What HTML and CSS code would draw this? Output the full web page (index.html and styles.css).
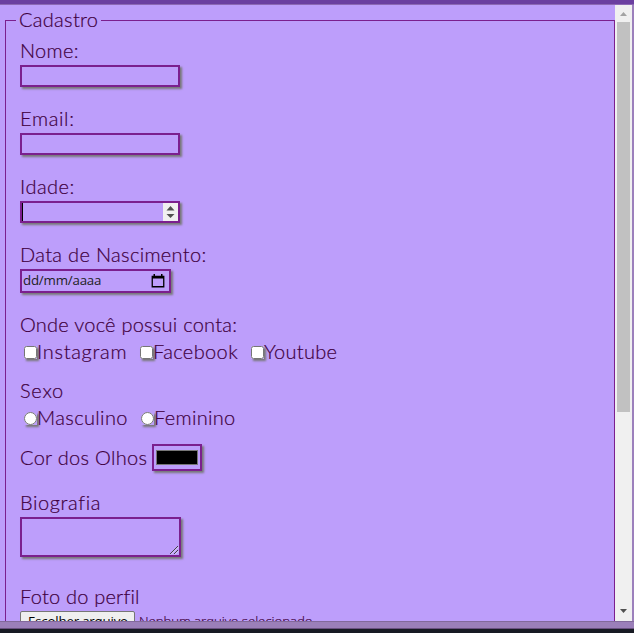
FILE: index.html
```html
<!DOCTYPE html>
<html lang="pt-BR">
<head>
<meta charset="utf-8">
<title>Cadastro</title>
<link rel="stylesheet" href="styles.css">
</head>
<body>
<div class="topbar"></div>
<div class="window">
<main class="page">
<fieldset>
<legend><span class="t-cadastro">Cadastro</span></legend>
<div class="group"><label><span class="t-nome">Nome:</span></label><input class="field" type="text"></div>
<div class="group"><label><span class="t-email">Email:</span></label><input class="field" type="text"></div>
<div class="group"><label><span class="t-idade">Idade:</span></label><div class="field number"><i class="caret"></i><svg class="spin" viewBox="0 0 15 18"><path d="M3.5 7.5 7.5 3l4 4.5zM3.5 11h8l-4 4z"/></svg></div></div>
<div class="group date-group"><label><span class="t-data">Data de Nascimento:</span></label><div class="field date"><span class="t-date">dd/mm/aaaa</span><svg viewBox="0 0 14 14"><path d="M1.25 2.5h11.5v10.25H1.25z" fill="none" stroke="#000" stroke-width="1.3"/><path d="M1 2h12v2.5H1zM2.5 0H4v3H2.5zM10 0h1.5v3H10z"/></svg></div></div>
<div class="choices"><p><span class="t-onde">Onde você possui conta:</span></p>
<div class="options"><label class="c1"><input type="checkbox"><span class="t-insta">Instagram</span></label><label class="c2"><input type="checkbox"><span class="t-face">Facebook</span></label><label><input type="checkbox"><span class="t-you">Youtube</span></label></div></div>
<div class="choices"><p><span class="t-sexo">Sexo</span></p>
<div class="options"><label class="r1"><input type="radio" name="s"><span class="t-masc">Masculino</span></label><label><input type="radio" name="s"><span class="t-fem">Feminino</span></label></div></div>
<div class="color-row"><span class="t-cor">Cor dos Olhos</span><div class="color"><i></i></div></div>
<div class="bio"><label><span class="t-bio">Biografia</span></label><div class="field area"><svg viewBox="0 0 10 10"><path d="M1 9 9 1M5 9l4-4" stroke="#444" fill="none"/><path d="M2 9.5 9.5 2M6 9.5 9.5 6" stroke="#eee" stroke-width=".6" fill="none"/></svg></div></div>
<div class="photo"><label><span class="t-foto">Foto do perfil</span></label><div class="file"><span class="btn"><span class="t-esc">Escolher arquivo</span></span><span class="t-nen">Nenhum arquivo selecionado</span></div></div>
</fieldset>
</main>
<div class="scroll"><svg class="up" viewBox="0 0 7 4"><path d="M0 4 3.5 0 7 4z"/></svg><div class="thumb"></div><svg class="down" viewBox="0 0 7 4"><path d="M0 0h7L3.5 4z"/></svg></div>
</div>
<div class="bottombar"></div>
<div class="desk"></div>
</body>
</html>
```
FILE: styles.css
```css
* { box-sizing: border-box; }
body { margin: 0; width: 634px; height: 633px; overflow: hidden; display: flex; flex-direction: column; background: #bd9efb; color: #400040; font: 300 20px/27px Lato, sans-serif; }
.topbar { flex: none; height: 5px; background: #6b3fa0; border-bottom: 1px solid #8c68b4; }
.window { height: 616px; display: flex; overflow: hidden; border-right: 2px solid #9c80bc; box-shadow: inset -1px 0 #70558d; }
.page { width: 615px; overflow: hidden; }
fieldset { margin: 2px 0 0 5px; width: 610px; height: 700px; border: 1px solid #7b1f8e; padding: 4px 0 0 14px; }
legend { margin-left: -4px; padding: 0 3px; width: 85px; height: 27px; line-height: 25px; white-space: nowrap; }
label, p { display: block; margin: 0; height: 27px; line-height: 25px; }
span { white-space: nowrap; }
legend, label, p, .t-cor { -webkit-text-stroke: .2px #400040; }
.t-cadastro, .t-nome, .t-you, .t-fem { letter-spacing: .3px; }
.t-foto { letter-spacing: .22px; }
.t-email { letter-spacing: .65px; }
.t-idade { letter-spacing: .5px; }
.t-data { letter-spacing: .33px; }
.t-onde { letter-spacing: .24px; }
.t-insta { letter-spacing: .7px; }
.t-face, .t-masc { letter-spacing: .38px; }
.t-sexo { letter-spacing: .75px; }
.t-bio { letter-spacing: .6px; }
.t-date, .t-esc { letter-spacing: -.2px; }
.t-nen { letter-spacing: -.08px; font-weight: 300; -webkit-text-stroke: .2px #400040; }
.group { height: 68px; }
.date-group { height: 70px; }
.field { display: flex; width: 160px; height: 22px; border: 2px solid #7b1f8e; background: transparent; box-shadow: 2px 2px 2px #777; padding: 0; margin: 0; }
.number { justify-content: space-between; }
.caret { width: 1px; background: #000; }
.spin { width: 15px; height: 18px; background: #f0f0f0; fill: #505050; }
.date { width: 151px; height: 24px; font: 400 13.3px/18px "Open Sans", sans-serif; color: #222; padding: 0 4px 0 1px; align-items: center; justify-content: space-between; }
.t-date { height: 20px; }
.date svg { width: 14px; height: 14px; }
.choices { height: 66px; }
.options { display: flex; }
.options label { display: flex; align-items: center; }
.options label span { height: 27px; }
.options input { width: 13px; height: 13px; margin: 0 0 0 4px; box-shadow: 2px 2px 2px #777; flex: none; }
.options input[type=checkbox] { border-radius: 2px; }
.options input[type=radio] { border-radius: 5px; }
.c1 { width: 116px; }
.c2 { width: 111px; }
.r1 { width: 117px; }
.color-row { display: flex; height: 46px; }
.t-cor { width: 132px; letter-spacing: .3px; }
.color { width: 50px; height: 27px; border: 2px solid #7b1f8e; padding: 4px 2px; box-shadow: 2px 2px 2px #777; }
.color i { display: block; height: 15px; background: #000; border: 1px solid #777; }
.bio { height: 94px; }
.area { width: 161px; height: 40px; align-items: flex-end; justify-content: flex-end; }
.area svg { width: 10px; height: 10px; }
.file { display: flex; font: 400 13.3px/20px "Open Sans", sans-serif; }
.btn { width: 115px; height: 24px; line-height: 18px; border: 1px solid #767676; border-radius: 2px; background: #efefef; color: #000; padding-left: 7px; margin-right: 4px; }
.scroll { width: 17px; background: #f0f0f0; display: flex; flex-direction: column; align-items: center; padding: 7px 0 8px; }
.scroll svg { width: 7px; height: 4px; fill: #a3a3a3; flex: none; }
.scroll .down { fill: #505050; margin-top: auto; }
.thumb { width: 13px; height: 390px; background: #c1c1c1; margin-top: 6px; flex: none; }
.bottombar { flex: none; height: 8px; background: #9b7fb9; border-top: 1px solid #82699b; border-bottom: 1px solid #6a5180; }
.desk { height: 4px; background: #171a23; }
```
